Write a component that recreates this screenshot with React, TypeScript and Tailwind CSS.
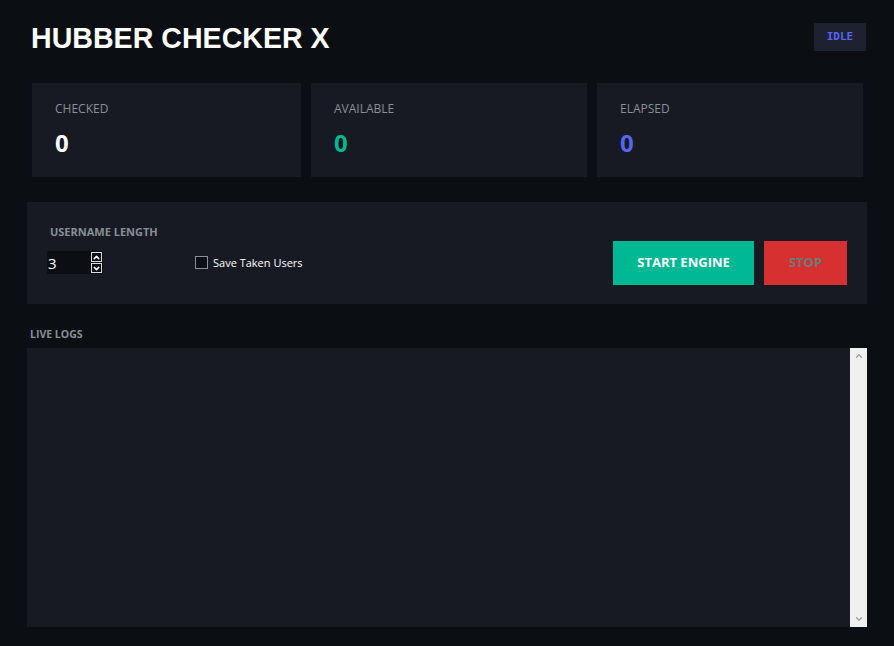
import { ChevronUp, ChevronDown } from "lucide-react";

const stats = [
  { label: "CHECKED", value: "0", color: "text-white", w: "w-[269px]" },
  { label: "AVAILABLE", value: "0", color: "text-[#00b894]", w: "w-[276px]" },
  { label: "ELAPSED", value: "0", color: "text-[#5865f2]", w: "w-[266px]" },
];

const ui = { fontFamily: '"Open Sans", "Noto Sans", sans-serif' };

export default function App() {
  return (
    <div className="relative h-[646px] w-[894px] overflow-hidden bg-[#0b0e12]" style={ui}>
      {/* header */}
      <div className="flex items-start justify-between pl-[31px] pr-[28px] pt-[20px]">
        <h1
          className="text-[28.6px] font-bold leading-[36px] text-white"
          style={{ fontFamily: '"Liberation Sans", Arial, sans-serif' }}
        >
          HUBBER CHECKER X
        </h1>
        <div
          className="mt-[3px] flex h-[28px] w-[52px] items-center justify-center bg-[#1e2130] text-[11px] font-bold text-[#5865f2]"
          style={{ fontFamily: '"DejaVu Sans Mono", monospace' }}
        >
          IDLE
        </div>
      </div>

      {/* stats */}
      <div className="mt-[27px] flex gap-[10px] pl-[32px]">
        {stats.map((s) => (
          <div key={s.label} className={`h-[94px] ${s.w} bg-[#171a22] pl-[23px] pt-[18px]`}>
            <p className="text-[12px] leading-[16px] text-[#8a8f98]">{s.label}</p>
            <p className={`mt-[10px] text-[24px] font-bold leading-[32px] ${s.color}`}>{s.value}</p>
          </div>
        ))}
      </div>

      {/* controls */}
      <div className="mx-[27px] mt-[25px] flex h-[102px] items-start justify-between bg-[#171a22] pl-[20px] pr-[20px]">
        <div className="pt-[23px]">
          <p className="ml-[3px] text-[11px] font-bold leading-[14px] text-[#8a8f98]">USERNAME LENGTH</p>
          <div className="mt-[12px] flex items-center">
            <div className="flex h-[23px] w-[56px] items-center justify-between bg-[#0b0e12] pl-[1px] pr-[1px]">
              <span className="text-[15px] leading-[20px] text-white">3</span>
              <div className="flex flex-col gap-[1px]">
                <div className="flex h-[10px] w-[11px] items-center justify-center border border-[#dcdcdc] bg-[#0b0e12]">
                  <ChevronUp className="h-[9px] w-[9px] text-white" strokeWidth={4} />
                </div>
                <div className="flex h-[10px] w-[11px] items-center justify-center border border-[#dcdcdc] bg-[#0b0e12]">
                  <ChevronDown className="h-[9px] w-[9px] text-white" strokeWidth={4} />
                </div>
              </div>
            </div>
            <div className="ml-[92px] flex items-center gap-[5px]">
              <div className="h-[13px] w-[13px] border border-[#8a8f98] bg-[#0b0e12]" />
              <span className="text-[11px] leading-[16px] text-white">Save Taken Users</span>
            </div>
          </div>
        </div>
        <div className="mt-[39px] flex gap-[10px]">
          <button className="h-[44px] w-[141px] bg-[#00b894] text-[13px] font-bold text-white">START ENGINE</button>
          <button className="h-[44px] w-[83px] bg-[#d63031] text-[13px] font-bold text-[#6d7b78]">STOP</button>
        </div>
      </div>

      {/* logs */}
      <p className="mt-[23px] pl-[30px] text-[10.5px] font-bold leading-[14px] text-[#8a8f98]">LIVE LOGS</p>
      <div className="mx-[27px] mt-[7px] flex h-[279px] bg-[#171a22]">
        <div className="flex-1" />
        <div className="flex w-[17px] flex-col items-center justify-between bg-[#f0f0f0] py-[3px]">
          <ChevronUp className="h-[10px] w-[10px] text-[#a0a0a0]" strokeWidth={3} />
          <ChevronDown className="h-[10px] w-[10px] text-[#a0a0a0]" strokeWidth={3} />
        </div>
      </div>
    </div>
  );
}
